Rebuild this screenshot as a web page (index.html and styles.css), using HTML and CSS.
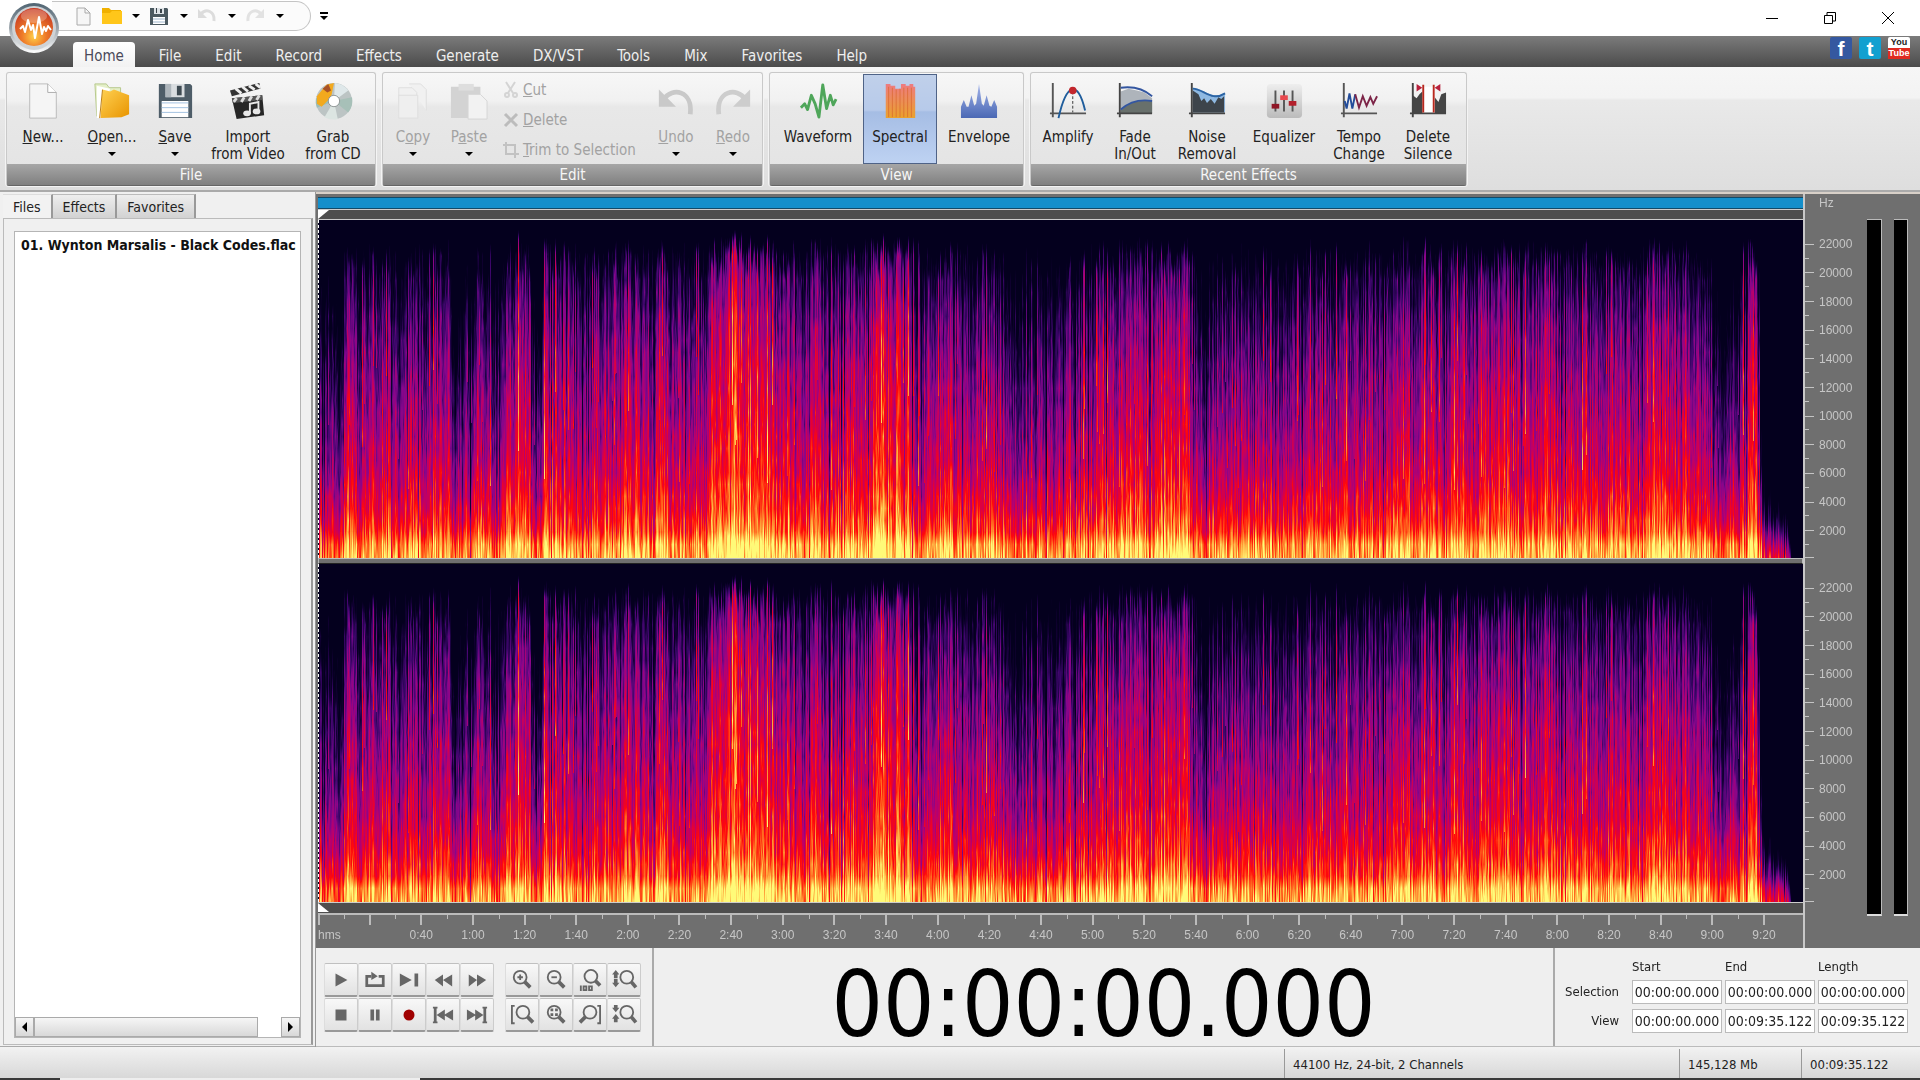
FILE: index.html
```html
<!DOCTYPE html>
<html lang="en">
<head>
<meta charset="utf-8">
<title>Audio Editor</title>
<link rel="stylesheet" href="styles.css">
</head>
<body>
<header class="titlebar">
  <div class="quick">
    <button class="qbtn" aria-label="New"><svg width="20" height="20" viewBox="0 0 20 20"><path d="M4 2h8l5 5v12H4z" fill="#f6f6f6" stroke="#aaa"/><path d="M12 2v5h5" fill="none" stroke="#aaa"/></svg></button>
    <button class="qbtn wide" aria-label="Open"><svg width="22" height="20" viewBox="0 0 22 20"><path d="M1 2h7l2 2h10v14H1z" fill="#f0b000"/><path d="M1 7h8l2-2h10v13H1z" fill="#ffc61a"/></svg><i class="arrow"></i></button>
    <button class="qbtn wide" aria-label="Save"><svg width="20" height="20" viewBox="0 0 20 20"><path d="M1 2h17l1 1v16H1z" fill="#4b5960"/><path d="M5 2h10v6H5z" fill="#dde2e6"/><path d="M11 3h2v4h-2zM7 2h1v5H7z" fill="#3b454b"/><path d="M4 11h12v7H4z" fill="#fff"/><path d="M4 13h12M4 16h12" stroke="#9fb6cc"/></svg><i class="arrow"></i></button>
    <button class="qbtn wide" aria-label="Undo" disabled><svg width="20" height="20" viewBox="0 0 20 20"><path d="M4 8c5-6 14-3 13 7" fill="none" stroke="#dcdcdc" stroke-width="3"/><path d="M1 3v9h9z" fill="#dcdcdc"/></svg><i class="arrow"></i></button>
    <button class="qbtn wide" aria-label="Redo" disabled><svg width="20" height="20" viewBox="0 0 20 20"><path d="M16 8C11 2 2 5 3 15" fill="none" stroke="#e2e2e2" stroke-width="3"/><path d="M19 3v9h-9z" fill="#e2e2e2"/></svg><i class="arrow"></i></button>
  </div>
  <button class="more" aria-label="Customize toolbar"><i class="arrow"></i></button>
  <div class="window">
    <button aria-label="Minimize"><svg width="12" height="12" viewBox="0 0 12 12"><path d="M0 6.500h12" stroke="#000"/></svg></button>
    <button aria-label="Restore"><svg width="12" height="12" viewBox="0 0 12 12"><path d="M.5 3.500h8v8h-8zM3 3V.5h8.500V9H9" fill="none" stroke="#000"/></svg></button>
    <button aria-label="Close"><svg width="12" height="12" viewBox="0 0 12 12"><path d="M0 0l12 12M12 0L0 12" stroke="#000"/></svg></button>
  </div>
  <button class="orb" aria-label="Application menu"><svg width="52" height="52" viewBox="0 0 52 52">
    <defs><linearGradient id="rim" x1="0" y1="0" x2="0" y2="1"><stop offset="0" stop-color="#4f6472"/><stop offset=".5" stop-color="#9aa3aa"/><stop offset="1" stop-color="#fff"/></linearGradient>
    <radialGradient id="glow" cx=".5" cy=".75" r=".7"><stop offset="0" stop-color="#ffd04a"/><stop offset=".45" stop-color="#ee7a28"/><stop offset="1" stop-color="#c93c22"/></radialGradient></defs>
    <circle cx="26" cy="26" r="25" fill="url(#rim)"/><circle cx="26" cy="26" r="22" fill="#cfd3d6"/><circle cx="26" cy="25" r="19" fill="url(#glow)"/><ellipse cx="26" cy="14" rx="13" ry="7" fill="#fff" opacity=".25"/>
    <path d="M12 27l3-3 2 6 3-12 3 10 2-5 2 13 4-21 3 17 2-7 2 4 2-5 3 4" fill="none" stroke="#fff" stroke-width="2" stroke-linejoin="round"/></svg></button>
</header>
<nav class="menu">
  <a class="on" href="#home">Home</a><a href="#file">File</a><a href="#edit">Edit</a><a href="#record">Record</a><a href="#effects">Effects</a><a href="#generate">Generate</a><a href="#dx">DX/VST</a><a href="#tools">Tools</a><a href="#mix">Mix</a><a href="#favorites">Favorites</a><a href="#help">Help</a>
  <div class="social"><a class="fb" href="#facebook">f</a><a class="tw" href="#twitter">t</a><a class="yt" href="#youtube"><span>You</span><span>Tube</span></a></div>
</nav>
<section class="ribbon">
  <div class="group g-file">
    <div class="tools">
      <button class="tool"><svg viewBox="0 0 40 40"><path d="M6 2h19l9 9v27H6z" fill="#f5f5f5" stroke="#b9b9b9"/><path d="M25 2v9h9" fill="#fff" stroke="#aaa"/></svg><span><u>N</u>ew...</span></button>
      <button class="tool"><svg viewBox="0 0 40 40"><defs><linearGradient id="fold" x1="0" y1="0" x2="1" y2="1"><stop offset="0" stop-color="#ffd152"/><stop offset="1" stop-color="#e89400"/></linearGradient></defs><path d="M2 2h12l3 4h12v30H4z" fill="#e4efc8" stroke="#b5c78a"/><path d="M4 4l14 3-10 31H4z" fill="#fff"/><path d="M10 8l8 2 4-2 16 6v20l-8 3-22 1z" fill="url(#fold)"/><path d="M10 8L7 38" stroke="#b97a10"/></svg><span><u>O</u>pen...</span><i class="arrow"></i></button>
      <button class="tool"><svg viewBox="0 0 40 40"><path d="M3 2h33l2 2v34H3z" fill="#4e5d68"/><path d="M10 2h20v14H10z" fill="#d9dde0"/><path d="M22 4h5v10h-5z" fill="#3e4a52"/><path d="M10 2h6v14h-6z" fill="#aeb6bc"/><path d="M6 20h28v17H6z" fill="#fff"/><path d="M6 22h28M6 27h28M6 32h28" stroke="#9fc0df"/></svg><span><u>S</u>ave</span><i class="arrow"></i></button>
      <button class="tool"><svg viewBox="0 0 40 40"><path d="M3 17l32-3 2 21-29 4z" fill="#262626"/><path d="M3 17l32-3v5L4 22z" fill="#555"/><path d="M1 9l31-8 1 6L3 15z" fill="#333"/><path d="M7 7l6 5M14 5l6 5M21 4l6 4M28 2l5 4" stroke="#eee" stroke-width="3"/><path d="M8 17l-3 4M16 16l-3 5M24 15l-3 5M32 14l-3 5" stroke="#ddd" stroke-width="3"/><path d="M22 33V23l9-2v10" fill="none" stroke="#e8e8e8" stroke-width="2"/><ellipse cx="19" cy="33" rx="4" ry="3" fill="#e8e8e8"/><ellipse cx="29" cy="31" rx="4" ry="3" fill="#e8e8e8"/></svg><span>Import<br>from Video</span></button>
      <button class="tool"><svg viewBox="0 0 40 40"><circle cx="21" cy="20" r="19" fill="#bcc4c4"/><path d="M21 20L22 1a19 19 0 0 1 14 8z" fill="#dfe8ea"/><path d="M21 20l19-4a19 19 0 0 1-4 16z" fill="#a7c0b8"/><path d="M21 20l4 19a19 19 0 0 1-14-2z" fill="#dce5e2"/><path d="M21 20L3 27a19 19 0 0 1-1-10z" fill="#9bbdb8"/><path d="M3 15L13 3l8-2-3 15-10 10-5-3z" fill="#f2a91e"/><path d="M9 7l6-5 3 7-4 2z" fill="#a85228"/><circle cx="21" cy="20" r="6" fill="#fff" stroke="#8c9494"/></svg><span>Grab<br>from CD</span></button>
    </div>
    <h2>File</h2>
  </div>
  <div class="group g-edit">
    <div class="tools">
      <button class="tool" disabled><svg viewBox="0 0 40 40"><path d="M5 6h14l5 5v20H5zM16 2h12l6 6v22" fill="#f1f1f1" stroke="#dedede"/><path d="M5 14h20v24H5z" fill="#efefef" stroke="#dedede"/></svg><span>C<u>o</u>py</span><i class="arrow"></i></button>
      <button class="tool" disabled><svg viewBox="0 0 40 40"><path d="M1 5h31v33H1z" fill="#d3d3d3"/><path d="M9 2h16v7H9z" fill="#dedede"/><path d="M19 13h13l7 7v19H19z" fill="#f2f2f2" stroke="#d5d5d5"/></svg><span>P<u>a</u>ste</span><i class="arrow"></i></button>
      <div class="stack">
        <button disabled><svg width="16" height="16" viewBox="0 0 16 16"><path d="M3 0l7 11M12 0L5 11" stroke="#d4d4d4" stroke-width="2"/><circle cx="4" cy="13" r="2" fill="none" stroke="#d4d4d4" stroke-width="2"/><circle cx="12" cy="13" r="2" fill="none" stroke="#d4d4d4" stroke-width="2"/></svg><span><u>C</u>ut</span></button>
        <button disabled><svg width="16" height="16" viewBox="0 0 16 16"><path d="M2 2l12 12M14 2L2 14" stroke="#bcbcbc" stroke-width="3"/></svg><span><u>D</u>elete</span></button>
        <button disabled><svg width="16" height="16" viewBox="0 0 16 16"><path d="M3 0v12h13M0 3h12v13" fill="none" stroke="#c2c2c2" stroke-width="2"/></svg><span><u>T</u>rim to Selection</span></button>
      </div>
      <button class="tool" disabled><svg viewBox="0 0 40 40"><path d="M7 18C16 5 38 9 35 34" fill="none" stroke="#c9c9c9" stroke-width="5"/><path d="M2 8v18h18z" fill="#c9c9c9"/></svg><span><u>U</u>ndo</span><i class="arrow"></i></button>
      <button class="tool" disabled><svg viewBox="0 0 40 40"><path d="M33 18C24 5 2 9 5 34" fill="none" stroke="#cdcdcd" stroke-width="5"/><path d="M38 8v18H20z" fill="#cdcdcd"/></svg><span><u>R</u>edo</span><i class="arrow"></i></button>
    </div>
    <h2>Edit</h2>
  </div>
  <div class="group g-view">
    <div class="tools">
      <button class="tool"><svg viewBox="0 0 40 40"><path d="M2 27l4-4 3 6 4-15 4 9 4 14 4-34 4 25 4-14 3 10 3-6" fill="none" stroke="#4fa65a" stroke-width="3" stroke-linejoin="round"/></svg><span>Waveform</span></button>
      <button class="tool active"><svg viewBox="0 0 40 40"><defs><linearGradient id="sp" x1="0" y1="0" x2="0" y2="1"><stop offset="0" stop-color="#ee7a80"/><stop offset="1" stop-color="#eaa22c"/></linearGradient></defs><path d="M5 2h5v2h5v3h6V2h5v2h4V2h4v3h2v33H5z" fill="url(#sp)"/><path d="M8 5v32M12 6v31M16 8v29M20 7v30M24 6v31M28 6v31M32 6v31" stroke="#d9662e" opacity=".7"/></svg><span>Spectral</span></button>
      <button class="tool"><svg viewBox="0 0 40 40"><defs><linearGradient id="en" x1="0" y1="0" x2="0" y2="1"><stop offset="0" stop-color="#a3b4ea"/><stop offset="1" stop-color="#4a68b4"/></linearGradient></defs><path d="M1 38V26l3-7 3 7 2 0 3-12 3 11 2-2 3-21 3 21 2 2 3-11 3 11 2 1 3-7 3 7v12z" fill="url(#en)"/></svg><span>Envelope</span></button>
    </div>
    <h2>View</h2>
  </div>
  <div class="group g-recent">
    <div class="tools">
      <button class="tool"><svg viewBox="0 0 40 40"><path d="M4 1v36M1 33h38" stroke="#555" stroke-width="2"/><path d="M10 38C18 2 30-4 38 30" fill="none" stroke="#1f5d9c" stroke-width="2"/><path d="M25 10v22" stroke="#333" stroke-width="1" stroke-dasharray="3 2"/><circle cx="25" cy="9" r="4" fill="#c2262c"/></svg><span>Amplify</span></button>
      <button class="tool"><svg viewBox="0 0 40 40"><path d="M5 10l8-3 9 2 8 2 8 6v15H5z" fill="#aeb4bb"/><path d="M5 30c10-10 20-11 33-10v13H5z" fill="#68706c"/><path d="M4 1v36M1 33h37" stroke="#444" stroke-width="2"/><path d="M5 6c15-2 25 2 33 9M5 29c10-9 20-11 33-9" fill="none" stroke="#3356a0" stroke-width="2"/></svg><span>Fade<br>In/Out</span></button>
      <button class="tool"><svg viewBox="0 0 40 40"><path d="M5 6c11 0 20 14 34 5v21H5z" fill="#8fb9e2"/><path d="M5 9l6 4 3 7 3-3 3 5 4-4 4 5 4-7 3 2 3-3v17H5z" fill="#3d444b"/><path d="M4 1v36M1 33h38" stroke="#444" stroke-width="2"/><path d="M5 7c11 0 20 14 34 5" fill="none" stroke="#2c64a4" stroke-width="2"/></svg><span>Noise<br>Removal</span></button>
      <button class="tool"><svg viewBox="0 0 40 40"><defs><linearGradient id="eq" x1="0" y1="0" x2="0" y2="1"><stop offset="0" stop-color="#eee"/><stop offset="1" stop-color="#bbb"/></linearGradient></defs><rect x="2" y="2" width="37" height="36" rx="4" fill="url(#eq)"/><path d="M11 9v22M20 9v22M29 9v22" stroke="#555" stroke-width="2"/><path d="M7 23h8v5H7z" fill="#8f1626"/><path d="M16 14h8v5h-8z" fill="#e8484e"/><path d="M25 20h8v5h-8z" fill="#b3202c"/></svg><span>Equalizer</span></button>
      <button class="tool"><svg viewBox="0 0 40 40"><path d="M4 1v36M1 33h38" stroke="#555" stroke-width="2"/><path d="M5 20l2 8 3-16 3 16 3-15" fill="none" stroke="#234c9a" stroke-width="2"/><path d="M16 13l4 14 4-12 4 10 4-9 3 7 4-8" fill="none" stroke="#7c2447" stroke-width="2"/></svg><span>Tempo<br>Change</span></button>
      <button class="tool"><svg viewBox="0 0 40 40"><path d="M4 14l4 3 3-4 3-3v23H4zM27 16l4 5 3-8 5-2v22H27z" fill="#454545"/><path d="M15 5h12v28H15z" fill="#fff"/><path d="M4 1v36M1 33h38" stroke="#444" stroke-width="2"/><path d="M15 3v29M26 3v29" stroke="#b8281e" stroke-width="2"/><path d="M8 2l6 4-6 4zM33 2l-6 4 6 4z" fill="#b8203c"/></svg><span>Delete<br>Silence</span></button>
    </div>
    <h2>Recent Effects</h2>
  </div>
</section>
<main class="workspace">
  <aside class="side">
    <div class="tabs"><button class="on">Files</button><button>Effects</button><button>Favorites</button></div>
    <div class="sidebody">
      <div class="list">
        <ul><li>01. Wynton Marsalis - Black Codes.flac</li></ul>
        <div class="hscroll"><button aria-label="Scroll left"><i class="left"></i></button><div class="thumb"></div><div class="track"></div><button aria-label="Scroll right"><i class="right"></i></button></div>
      </div>
    </div>
  </aside>
  <section class="editor">
    <div class="wave">
      <div class="tracks">
        <div class="head"><div class="overview"></div><div class="strip"><i class="mark top"></i></div></div>
        <canvas class="spec" data-channel="1"></canvas>
        <div class="split"></div>
        <canvas class="spec" data-channel="2"></canvas>
        <div class="strip foot"><i class="mark bottom"></i></div>
        <div class="times"><span class="unit">hms</span><span></span><span>0:40</span><span>1:00</span><span>1:20</span><span>1:40</span><span>2:00</span><span>2:20</span><span>2:40</span><span>3:00</span><span>3:20</span><span>3:40</span><span>4:00</span><span>4:20</span><span>4:40</span><span>5:00</span><span>5:20</span><span>5:40</span><span>6:00</span><span>6:20</span><span>6:40</span><span>7:00</span><span>7:20</span><span>7:40</span><span>8:00</span><span>8:20</span><span>8:40</span><span>9:00</span><span>9:20</span></div>
      </div>
      <div class="scale">
        <div class="hz">Hz</div>
        <div class="freqs"><span>22000</span><span>20000</span><span>18000</span><span>16000</span><span>14000</span><span>12000</span><span>10000</span><span>8000</span><span>6000</span><span>4000</span><span>2000</span></div>
        <div class="gap"></div>
        <div class="freqs"><span>22000</span><span>20000</span><span>18000</span><span>16000</span><span>14000</span><span>12000</span><span>10000</span><span>8000</span><span>6000</span><span>4000</span><span>2000</span></div>
        <div class="tail"></div>
      </div>
      <div class="meters"><div></div><div></div></div>
    </div>
    <div class="transport">
      <div class="pads">
        <div class="pad">
          <button aria-label="Play"><svg viewBox="0 0 24 24"><path d="M6 5l13 7-13 7z"/></svg></button>
          <button aria-label="Loop"><svg viewBox="0 0 24 24"><path d="M8 8H3v10h18V8h-5" fill="none" stroke="#666" stroke-width="3"/><path d="M8 3l7 5-7 4z"/></svg></button>
          <button aria-label="Play to end"><svg viewBox="0 0 24 24"><path d="M2 5l13 7-13 7zM18 5h4v14h-4z"/></svg></button>
          <button aria-label="Rewind"><svg viewBox="0 0 24 24"><path d="M12 6v13l-9-7zM22 6v13l-10-7z"/></svg></button>
          <button aria-label="Forward"><svg viewBox="0 0 24 24"><path d="M3 6v13l9-7zM12 6v13l10-7z"/></svg></button>
          <button aria-label="Stop"><svg viewBox="0 0 24 24"><path d="M6 6h12v12H6z"/></svg></button>
          <button aria-label="Pause"><svg viewBox="0 0 24 24"><path d="M7 6h4v12H7zM13 6h4v12h-4z"/></svg></button>
          <button aria-label="Record"><svg viewBox="0 0 24 24"><circle cx="12" cy="12" r="6" fill="#a00000"/></svg></button>
          <button aria-label="To start"><svg viewBox="0 0 24 24"><path d="M1 3h5v2H5v14h1v2H1v-2h1V5H1zM14 6v12l-9-6zM23 6v12l-10-6z"/></svg></button>
          <button aria-label="To end"><svg viewBox="0 0 24 24"><path d="M23 3h-5v2h1v14h-1v2h5v-2h-1V5h1zM10 6v12l9-6zM1 6v12l10-6z"/></svg></button>
        </div>
        <div class="pad four">
          <button aria-label="Zoom in"><svg viewBox="0 0 24 24"><g class="lens"><circle cx="10" cy="9" r="7"/><path d="M7 9h6M10 6v6"/><path class="grip" d="M15 14l6 6"/></g></svg></button>
          <button aria-label="Zoom out"><svg viewBox="0 0 24 24"><g class="lens"><circle cx="10" cy="9" r="7"/><path d="M7 9h6"/><path class="grip" d="M15 14l6 6"/></g></svg></button>
          <button aria-label="Zoom 100"><svg viewBox="0 0 24 24"><g class="lens"><circle cx="13" cy="8" r="7"/><path class="grip" d="M18 13l5 5"/></g><path d="M1 18h2v6H1zM4 18h5v6H4zM6 20v2h1v-2zM10 18h5v6h-5zM12 20v2h1v-2z" fill-rule="evenodd"/></svg></button>
          <button aria-label="Vertical zoom in"><svg viewBox="0 0 24 24"><g class="lens"><circle cx="15" cy="9" r="7"/><path class="grip" d="M20 14l5 6"/></g><path d="M-1 6l4-5 4 5H5v4H1V6zM-1 15l4 5 4-5H5v-4H1v4z"/></svg></button>
          <button aria-label="Zoom selection start"><svg viewBox="0 0 24 24"><g class="lens"><circle cx="13" cy="9" r="7"/><path class="grip" d="M18 14l6 6"/><path d="M4 2H1v19h3"/></g></svg></button>
          <button aria-label="Zoom selection"><svg viewBox="0 0 24 24"><g class="lens"><circle cx="10" cy="9" r="7"/><path class="grip" d="M15 14l6 6"/></g><path d="M6 5h3v3H6zM11 5h3v3h-3zM6 10h3v3H6zM11 10h3v3h-3z"/></svg></button>
          <button aria-label="Zoom selection end"><svg viewBox="0 0 24 24"><g class="lens"><circle cx="12" cy="9" r="7"/><path class="grip" d="M7 14l-6 6"/><path d="M20 2h3v19h-3"/></g></svg></button>
          <button aria-label="Vertical zoom out"><svg viewBox="0 0 24 24"><g class="lens"><circle cx="15" cy="9" r="7"/><path class="grip" d="M20 14l5 6"/></g><path d="M-1 4l4 5 4-5H5V1H1v3zM-1 16l4-5 4 5H5v4H1v-4z"/></svg></button>
        </div>
      </div>
      <div class="clock">00:00:00.000</div>
      <div class="fields">
        <span></span><span class="col">Start</span><span class="col">End</span><span class="col">Length</span>
        <label for="s1">Selection</label><input id="s1" value="00:00:00.000"><input aria-label="Selection end" value="00:00:00.000"><input aria-label="Selection length" value="00:00:00.000">
        <label for="v1">View</label><input id="v1" value="00:00:00.000"><input aria-label="View end" value="00:09:35.122"><input aria-label="View length" value="00:09:35.122">
      </div>
    </div>
  </section>
</main>
<footer class="status"><span class="format">44100 Hz, 24-bit, 2 Channels</span><span class="size">145,128 Mb</span><span class="total">00:09:35.122</span></footer>
<div class="taskbar"><div></div></div>
<script src="spectrum.js"></script>
</body>
</html>
```
FILE: styles.css
```css
* { box-sizing: border-box; }
body {
  margin: 0; height: 100vh; display: flex; flex-direction: column; overflow: hidden;
  font: 15px/18px "DejaVu Sans Condensed", "Noto Sans", sans-serif; color: #222; background: #f0f0f0;
}
button { font: inherit; color: inherit; background: none; border: 0; padding: 0; }
svg { display: block; flex: none; overflow: visible; }
a { color: inherit; text-decoration: none; }
.arrow { display: block; width: 0; height: 0; border: 4px solid transparent; border-top-color: #000; border-bottom: 0; }

.titlebar { position: relative; z-index: 2; height: 36px; flex: none; display: flex; align-items: center; background: #fff; padding: 0 0 4px 52px; }
.quick { height: 30px; width: 259px; display: flex; align-items: center; gap: 4px; padding-left: 21px; border: 1px solid #c4c4c4; border-left: 0; border-radius: 0 16px 16px 0; background: #fbfbfb; }
.qbtn { width: 24px; display: flex; align-items: center; justify-content: space-between; }
.qbtn.wide { width: 44px; padding-right: 5px; }
.more { margin-left: 9px; border-top: 2px solid #000; padding-top: 2px; }
.window { margin-left: auto; display: flex; align-self: stretch; padding-right: 3px; }
.window button { width: 58px; display: grid; place-items: center; padding-top: 3px; }
.orb { position: absolute; left: 8px; top: 2px; }

.menu { height: 31px; flex: none; display: flex; align-items: flex-end; padding-left: 73px; color: #eee; background: linear-gradient(#7b7b7b, #4b4b4b); }
.menu > a { height: 25px; line-height: 28px; padding: 0 17px; }
.menu > a.on { padding: 0 11px; margin-right: 7px; background: linear-gradient(#fff, #f2f2f2); color: #4a4a5a; border-radius: 4px 4px 0 0; }
.social { margin-left: auto; align-self: flex-start; display: flex; gap: 7px; padding: 1px 10px 0 0; }
.social a { width: 22px; height: 22px; border-radius: 2px; font: bold 21px/24px "Liberation Sans", sans-serif; text-align: center; color: #fff; }
.fb { background: #3558a0; }
.tw { background: #12a0d0; }
.social .yt { display: flex; flex-direction: column; font: bold 9px/11px "Liberation Sans", sans-serif; background: #fff; color: #222; }
.yt span + span { background: #e02a20; color: #fff; }

.ribbon { height: 125px; flex: none; display: flex; gap: 6px; padding: 5px 6px 4px; background: linear-gradient(#f6f6f6 0, #f3f3f3 25%, #e9e9e9 27%, #dedede 100%); border-bottom: 2px solid #aaa; }
.group { display: flex; flex-direction: column; border: 1px solid #c9c9c9; border-bottom-color: #666; border-radius: 3px; box-shadow: 0 0 0 1px #f4f4f4; background: linear-gradient(#f7f7f7 0, #f1f1f1 25%, #e8e8e8 30%, #e3e3e3 100%); }
.g-file { width: 370px; }
.g-edit { width: 381px; }
.g-view { width: 255px; }
.g-recent { width: 437px; }
.group h2 { margin: 0; height: 21px; font: inherit; line-height: 22px; text-align: center; color: #f6f6f6; background: linear-gradient(#a6a6a6, #808080); }
.tools { flex: 1; display: grid; padding: 1px 0 0 3px; }
.g-file .tools { grid-template-columns: 66px 72px 54px 92px 78px; }
.g-edit .tools { grid-template-columns: 54px 58px 149px 58px 56px; }
.g-view .tools { grid-template-columns: 90px 74px 84px; }
.g-recent .tools { grid-template-columns: 68px 66px 78px 76px 74px 64px; }
.tool { display: flex; flex-direction: column; align-items: center; padding-top: 8px; line-height: 17px; }
.tool svg { width: 38px; height: 38px; }
.tool span { margin-top: 9px; text-align: center; white-space: nowrap; }
.tool .arrow { margin-top: 6px; }
.tool:disabled, .stack button { color: #a2a2a2; }
.tool.active { border: 1px solid #4f6387; padding-top: 7px; background: linear-gradient(#c0d0ea 0, #b7caea 40%, #a5bde4 42%, #bed2f2 100%); }
.stack { display: flex; flex-direction: column; justify-content: space-between; padding: 5px 0 3px 5px; }
.stack button { display: flex; align-items: center; gap: 4px; height: 22px; white-space: nowrap; }

.workspace { flex: 1; min-height: 0; display: flex; }
.side { width: 315px; flex: none; display: flex; flex-direction: column; padding: 2px 2px 1px 3px; border-bottom: 1px solid #aaa; font-size: 14px; }
.tabs { display: flex; height: 24px; }
.tabs button { padding: 0 10px; border-right: 2px solid #999; background: linear-gradient(#eee, #d2d2d2); border-top: 1px solid #bbb; }
.tabs button.on { background: #f2f2f2; border-top-color: #ddd; }
.sidebody { flex: 1; display: flex; padding: 12px 10px 6px; border: 1px solid #bbb; border-right: 2px solid #999; }
.list { flex: 1; min-width: 0; display: flex; flex-direction: column; background: #fff; border: 1px solid #b5b5b5; }
.list ul { flex: 1; margin: 0; padding: 4px 6px; list-style: none; font-weight: bold; white-space: nowrap; color: #111; }
.hscroll { display: flex; height: 20px; }
.hscroll button, .thumb { border: 1px solid #aaa; background: linear-gradient(#f6f6f6, #d8d8d8); }
.hscroll button { width: 19px; display: grid; place-items: center; }
.thumb { flex: 1; }
.track { width: 23px; }
.left, .right { width: 0; height: 0; border: 5px solid transparent; }
.left { border-right-color: #000; border-left: 0; }
.right { border-left-color: #000; border-right: 0; }

.editor { flex: 1; min-width: 0; display: flex; flex-direction: column; border-left: 1px solid #999; }
.wave { flex: 1; min-height: 0; display: flex; background: #6f6f6f; padding-left: 2px; border-top: 2px solid #d8d0c8; color: #c6c6c6; font: 12px/14px "Liberation Sans", sans-serif; }
.tracks { flex: 1; min-width: 0; display: flex; flex-direction: column; border-right: 2px solid #c8c8c8; }
.head { height: 26px; padding-top: 3px; border-bottom: 1px solid #ccc; }
.overview { height: 12px; background: #148fcb; border: 1px solid #124a68; border-width: 1px 0; }
.strip { height: 10px; background: #4e4e4e; border-top: 1px solid #ccc; }
.mark { display: block; width: 11px; height: 9px; background: #fff; }
.mark.top { clip-path: polygon(0 0, 100% 0, 0 100%); }
.mark.bottom { clip-path: polygon(0 0, 100% 100%, 0 100%); }
.spec { flex: 1 1 0; min-height: 0; width: 100%; display: block; background: #050020; border-left: 1px dashed #fff; }
.split { height: 6px; background: #6f6f6f; border: 1px solid #bbb; border-bottom-color: #222; }
.foot { height: 11px; }
.times { height: 35px; display: flex; border-top: 2px solid #bbb; }
.times span { width: 3.4775%; flex: none; padding-top: 13px; text-align: center; background: linear-gradient(#bbb, #bbb) 50% 0 / 2px 10px no-repeat, linear-gradient(#bbb, #bbb) 0 0 / 1px 4px no-repeat; }
.times .unit { width: 1.7388%; text-align: left; background-position: 0 0; }
.scale { width: 58px; display: flex; flex-direction: column; }
.hz { height: 26px; padding: 2px 0 0 14px; }
.freqs { flex: 1 1 0; display: flex; flex-direction: column; padding: 10px 0 12px; border-bottom: 1px solid #c4c4c4; border-image: linear-gradient(90deg, #c4c4c4 10px, transparent 10px) 1; }
.freqs span { flex: 1; display: flex; align-items: center; padding-left: 14px; background: linear-gradient(#c4c4c4, #c4c4c4) 0 50% / 9px 1px no-repeat, linear-gradient(#c4c4c4, #c4c4c4) 0 100% / 4px 1px no-repeat; }
.gap { height: 6px; }
.tail { height: 46px; }
.meters { width: 57px; display: flex; gap: 12px; padding: 25px 12px 32px 4px; }
.meters div { flex: 1; background: #000; border: 1px solid #bbb; border-left: 0; border-bottom: 2px solid #ddd; }

.transport { height: 99px; flex: none; display: flex; border-bottom: 1px solid #bbb; background: #efefef; }
.pads { width: 338px; display: flex; gap: 11px; padding: 15px 0 0 8px; border-right: 2px solid #aaa; }
.pad { height: 69px; display: grid; grid-template-columns: repeat(5, 34px); gap: 1px 0; }
.pad.four { grid-template-columns: repeat(4, 34px); }
.pad button { display: grid; place-items: center; border: 1px solid #c0c0c0; border-left-color: #ddd; border-bottom: 2px solid #999; border-right-color: #ccc; border-radius: 2px; background: linear-gradient(#f8f8f8, #e2e2e2); }
.pad svg { width: 22px; height: 22px; fill: #666; }
.lens { fill: none; stroke: #666; stroke-width: 2; }
.grip { stroke-width: 4; }
.clock { flex: 1; text-align: center; font-size: 90px; line-height: 114px; color: #000; white-space: nowrap; height: 97px; }
.fields { width: 367px; display: grid; grid-template-columns: 66px repeat(3, 90px); grid-template-rows: 20px 29px 30px; gap: 0 3px; padding: 9px 12px 0 0; border-left: 2px solid #aaa; font-size: 13px; justify-content: end; align-content: start; align-items: center; }
.fields label { text-align: right; padding-right: 10px; }
.fields input { width: 100%; height: 24px; min-width: 0; border: 1px solid #bbb; background: #fff; font: inherit; font-size: 14px; color: #222; padding: 0; text-align: center; }

.status { height: 31px; flex: none; display: flex; justify-content: flex-end; align-items: stretch; font-size: 13px; background: linear-gradient(#f2f2f2, #d8d8d8); }
.status span { border-left: 1px solid #999; padding-left: 8px; margin-top: 2px; line-height: 31px; }
.format { width: 395px; }
.size { width: 122px; }
.total { width: 119px; }
.taskbar { height: 2px; flex: none; background: #3a3a3a; padding-left: 60px; }
.taskbar div { width: 360px; height: 2px; background: #eee; }
```
FILE: spectrum.js
```js
// Colour ramp: level -> rgb
const ramp = [[0, 4, 0, 30], [.12, 18, 0, 52], [.25, 62, 6, 108], [.38, 132, 6, 140], [.5, 184, 0, 110], [.6, 226, 0, 56], [.68, 255, 8, 10], [.8, 255, 96, 28], [.9, 255, 176, 66], [1, 255, 250, 120]];
// Mean level against height (0 = lowest frequency)
const slope = [[0, .93], [.04, .89], [.08, .76], [.14, .67], [.25, .56], [.4, .47], [.55, .38], [.7, .27], [.82, .14], [.9, .03], [.94, -.14], [1, -.6]];
// Loudness along the recording
const loud = [[0, -.2], [.012, -.16], [.015, -.3], [.017, -.02], [.052, 0], [.053, -.3], [.056, -.05], [.088, .03], [.091, -.4], [.096, -.2], [.1, -.2], [.102, -.4], [.106, -.14], [.13, -.06], [.133, .14], [.142, .1], [.144, -.35], [.149, -.3], [.152, .1], [.17, .04], [.2, .02], [.26, .02], [.264, .14], [.278, .36], [.29, .26], [.31, .06], [.335, .1], [.345, 0], [.37, .08], [.38, .26], [.396, .26], [.4, .02], [.43, 0], [.45, -.05], [.47, -.14], [.51, -.08], [.54, .02], [.566, .14], [.585, .12], [.59, -.14], [.61, -.17], [.63, -.06], [.68, -.03], [.74, .02], [.78, .08], [.81, .06], [.825, .13], [.84, .01], [.88, .04], [.92, .06], [.936, -.05], [.94, -.3], [.957, -.24], [.959, .08], [.966, .22], [.97, -.1], [.973, -.42], [.982, -.55], [.99, -.75], [.993, -2], [1, -2]];

function mix(table, t) {
  let i = 1;
  while (i < table.length - 1 && table[i][0] < t) i++;
  const a = table[i - 1], b = table[i];
  const k = Math.max(0, Math.min(1, (t - a[0]) / (b[0] - a[0])));
  return a.slice(1).map((v, n) => v + (b[n + 1] - v) * k);
}

function random(seed) {
  return () => {
    seed = (seed + 0x6D2B79F5) | 0;
    let t = Math.imul(seed ^ (seed >>> 15), 1 | seed);
    t = (t + Math.imul(t ^ (t >>> 7), 61 | t)) ^ t;
    return ((t ^ (t >>> 14)) >>> 0) / 4294967296;
  };
}

function draw(canvas) {
  const w = canvas.width = canvas.clientWidth, h = canvas.height = canvas.clientHeight;
  const ctx = canvas.getContext("2d"), img = ctx.createImageData(w, h);
  const columns = random(77), cells = random(100 + Number(canvas.dataset.channel));
  const colours = Array.from({ length: 256 }, (_, i) => mix(ramp, i / 255));
  const levels = Array.from({ length: h }, (_, y) => mix(slope, 1 - y / h)[0]);
  let drift = 0;
  for (let x = 0; x < w; x++) {
    drift = drift * .75 + (columns() - .5) * .1;
    const t = x / w, e = mix(loud, t)[0], fade = t > .971;
    let n = drift + (columns() - .5) * .26;
    const pick = columns(), reach = .2 + columns() * .4, top = .95 - columns() * .14;
    const spike = pick > .9 && !fade ? .22 : 0;
    if (pick < .08) n -= .18;
    let cell = 0, next = 0;
    for (let y = 0; y < h; y++) {
      const f = 1 - y / h;
      if (y % 12 === 0) { cell = next; next = (cells() - .5) * .18; }
      const k = (y % 12) / 12;
      const gain = fade ? .5 + f * 5 : e < 0 ? .35 + f * 1.2 : .4 + f * .7;
      let v = levels[y] + e * gain + n * (f < .08 ? .8 : .85 + f * .2) + cell * (1 - k) + next * k;
      if (f > reach) v += spike;
      if (f > top) v -= (f - top) * 5;
      if (t > .993) v = 0;
      const c = colours[Math.max(0, Math.min(255, Math.round(v * 255)))];
      const p = (y * w + x) * 4;
      img.data[p] = c[0]; img.data[p + 1] = c[1]; img.data[p + 2] = c[2]; img.data[p + 3] = 255;
    }
  }
  ctx.putImageData(img, 0, 0);
}

document.querySelectorAll(".spec").forEach(draw);
```
